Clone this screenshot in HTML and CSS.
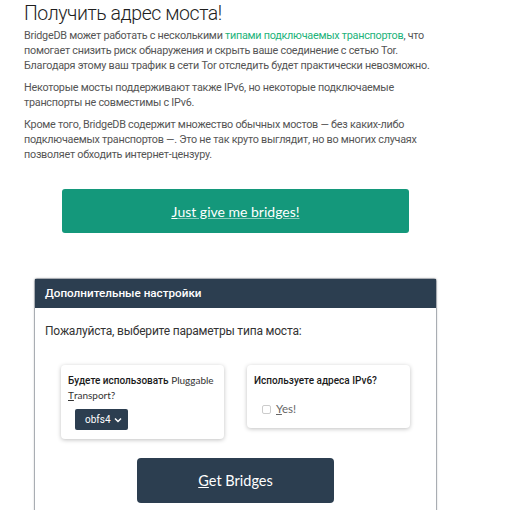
FILE: index.html
```html
<!DOCTYPE html>
<html lang="ru">
<head>
<meta charset="utf-8">
<title>BridgeDB</title>
<link rel="stylesheet" href="styles.css">
</head>
<body>
  <div class="container">
    <h1>Получить адрес моста!</h1>
    <p>BridgeDB может работать с несколькими <a href="#">типами подключаемых транспортов</a>, что помогает снизить риск обнаружения и скрыть ваше соединение с сетью Tor. Благодаря этому ваш трафик в сети Tor отследить будет практически невозможно.</p>
    <p>Некоторые мосты поддерживают также IPv6, но некоторые подключаемые транспорты не совместимы с IPv6.</p>
    <p>Кроме того, BridgeDB содержит множество обычных мостов — без каких-либо подключаемых транспортов —. Это не так круто выглядит, но во многих случаях позволяет обходить интернет-цензуру.</p>

    <a class="btn-green" href="#"><u>J</u>ust give me bridges!</a>

    <div class="panel">
      <div class="panel-heading">Дополнительные настройки</div>
      <div class="panel-body">
        <p class="lead">Пожалуйста, выберите параметры типа моста:</p>
        <div class="cards">
          <div class="card">
            <label for="transport"><b>Будете использовать</b> Pluggable <u>T</u>ransport?</label>
            <div class="select">
              <span>obfs4</span>
              <svg width="8" height="6" viewBox="0 0 8 6"><path d="M1 1.5 L4 4.5 L7 1.5" fill="none" stroke="#fff" stroke-width="1.5"/></svg>
            </div>
          </div>
          <div class="card">
            <div class="card-title">Используете адреса IPv6?</div>
            <label class="check"><span class="box"></span><span><u>Y</u>es!</span></label>
          </div>
        </div>
        <a class="btn-dark" href="#"><u>G</u>et Bridges</a>
      </div>
    </div>
  </div>
</body>
</html>
```

FILE: styles.css
```css
body {
    margin: 0;
    background: #fff;
    font-family: Roboto, "Noto Sans", sans-serif;
}
.container {
    width: 423px;
    margin-left: 24px;
}
h1 {
    font-weight: 300;
    font-size: 19.5px;
    letter-spacing: -0.45px;
    color: #1e1e1e;
    margin: 0 0 1.4px;
    line-height: 28px;
}
p {
    font-size: 10.8px;
    letter-spacing: -0.25px;
    line-height: 14.6px;
    color: #555;
    margin: 0 0 8px;
}
p a {
    color: #21b37a;
    text-decoration: none;
}
.btn-green {
    display: flex;
    align-items: center;
    justify-content: center;
    width: 347px;
    height: 44px;
    margin: 27px auto 0;
    background: #14987b;
    border-radius: 3px;
    color: #fff;
    font-family: Lato, sans-serif;
    font-size: 14px;
    text-decoration: underline;
    text-decoration-color: rgba(255, 255, 255, 0.5);
}
.panel {
    margin: 45px 10px 0;
    border: 1px solid #a9adb3;
    border-radius: 3px 3px 0 0;
    box-shadow: 0 0 2px rgba(0, 0, 0, 0.2);
}
.panel-heading {
    background: #2c3e50;
    color: #fff;
    font-size: 11.7px;
    font-weight: 500;
    height: 29px;
    line-height: 29px;
    padding-left: 10px;
}
.panel-body {
    padding: 16px 0 10px;
}
.lead {
    font-size: 12px;
    letter-spacing: -0.2px;
    line-height: 15px;
    color: #333;
    margin: 0 0 26px 10px;
}
.cards {
    display: flex;
    justify-content: center;
    align-items: flex-start;
    gap: 23px;
}
.card {
    width: 149px;
    padding: 8px 7px 10px;
    border-radius: 4px;
    box-shadow: 0 1px 4px rgba(0, 0, 0, 0.25);
    font-size: 10px;
    line-height: 14px;
    color: #333;
}
.card:first-child {
    height: 56px;
}
.card:last-child {
    height: 45px;
}
.card label b, .card-title {
    font-weight: 500;
    color: #1a1a1a;
}
.card label {
    font-family: Lato, sans-serif;
}
.card label b {
    font-family: Roboto, sans-serif;
}
.select {
    display: flex;
    align-items: center;
    justify-content: space-between;
    width: 53px;
    height: 21px;
    box-sizing: border-box;
    margin: 6px 0 0 7px;
    padding: 0 6px 0 10px;
    background: #2c3e50;
    border-radius: 2px;
    color: #fff;
    font-size: 10px;
}
.card-title {
    padding-top: 1px;
}
.check {
    display: flex;
    align-items: center;
    gap: 5px;
    margin: 14px 0 0 8px;
    font-size: 11.5px;
    color: #666;
}
.box {
    width: 7px;
    height: 7px;
    border: 1px solid #ccc;
    border-radius: 2px;
}
.btn-dark {
    display: flex;
    align-items: center;
    justify-content: center;
    width: 197px;
    height: 45px;
    margin: 19px auto 0;
    background: #2c3e50;
    border-radius: 4px;
    color: #fff;
    font-family: Lato, sans-serif;
    font-size: 14.5px;
    text-decoration: none;
}
```
